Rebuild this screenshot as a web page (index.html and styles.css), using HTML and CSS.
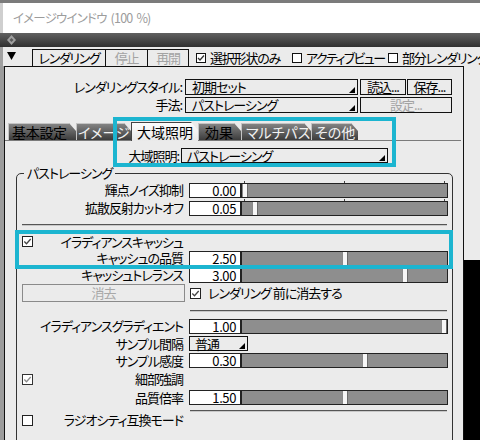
FILE: index.html
```html
<!DOCTYPE html>
<html lang="ja">
<head>
<meta charset="utf-8">
<title>イメージウインドウ</title>
<link rel="stylesheet" href="styles.css">
</head>
<body>
<div class="win">
  <div class="topstrip"></div>
  <div class="titlebar">イメージウインドウ (100 %)</div>
  <div class="darkbar">
    <svg class="grip" width="9" height="10" viewBox="0 0 9 10"><polygon points="4.5,0 9,5 4.5,10 0,5" fill="#a0a0a0"/><polygon points="4.5,3 6.5,5 4.5,7 2.5,5" fill="#5a5a5a"/></svg>
  </div>
  <div class="toolbar">
    <svg class="menu-tri" width="9" height="8" viewBox="0 0 9 8"><polygon points="0,0 9,0 4.5,8" fill="#000"/></svg>
    <div class="btngroup">
      <span class="tbtn tb1">レンダリング</span>
      <span class="tbtn tb2 dis">停止</span>
      <span class="tbtn tb3 dis">再開</span>
    </div>
    <span class="tcheck tc1"><svg class="cb" width="10" height="10" viewBox="0 0 10 10"><rect x="0.5" y="0.5" width="9" height="9" fill="#fff" stroke="#111"/><path d="M2 5 L4 7 L8 2.5" fill="none" stroke="#333" stroke-width="1.3"/></svg>選択形状のみ</span>
    <span class="tcheck tc2"><svg class="cb" width="10" height="10" viewBox="0 0 10 10"><rect x="0.5" y="0.5" width="9" height="9" fill="#fff" stroke="#111"/></svg>アクティブビュー</span>
    <span class="tcheck tc3"><svg class="cb" width="10" height="10" viewBox="0 0 10 10"><rect x="0.5" y="0.5" width="9" height="9" fill="#fff" stroke="#111"/></svg>部分レンダリング</span>
  </div>
  <div class="main">
    <div class="lstrip"></div>
    <div class="panel">
      <div class="frow">
        <span class="flabel">レンダリングスタイル:</span>
        <span class="dd dd-style">初期セット<i class="arr"></i></span>
        <span class="pbtn pb1">読込...</span>
        <span class="pbtn pb2">保存...</span>
      </div>
      <div class="frow">
        <span class="flabel">手法:</span>
        <span class="dd dd-style">パストレーシング<i class="arr"></i></span>
        <span class="pbtn pb3 dis">設定...</span>
      </div>
      <div class="tabs">
        <span class="tab dk t1">基本設定</span>
        <span class="tab t2">イメージ</span>
        <span class="tab active t3">大域照明</span>
        <span class="tab dk t4">効果</span>
        <span class="tab t5">マルチパス</span>
        <span class="tab t6">その他</span>
      </div>
      <div class="girow">
        <span class="gilabel">大域照明:</span>
        <span class="dd dd-gi">パストレーシング<i class="arr"></i></span>
      </div>
      <fieldset class="group">
        <legend>パストレーシング</legend>
        <div class="row h18">
          <span class="lab">輝点ノイズ抑制</span><span class="inp">0.00</span>
          <span class="sl"><i class="tick tk1"></i><i class="tick tk2"></i><i class="tick tk3"></i><i class="thumb" style="left:0px"></i></span>
        </div>
        <div class="row h18">
          <span class="lab">拡散反射カットオフ</span><span class="inp">0.05</span>
          <span class="sl"><i class="tick tk1"></i><i class="tick tk2"></i><i class="tick tk3"></i><i class="thumb" style="left:10px"></i></span>
        </div>
        <div class="sep sep1"></div>
        <div class="row h17">
          <span class="lab cblab"><svg class="cb" width="11" height="11" viewBox="0 0 11 11"><rect x="0.5" y="0.5" width="10" height="10" fill="#fff" stroke="#222"/><path d="M2.3 5.5 L4.5 7.7 L8.7 3" fill="none" stroke="#444" stroke-width="1.3"/></svg><span class="cbt">イラディアンスキャッシュ</span></span>
        </div>
        <div class="row h16">
          <span class="lab">キャッシュの品質</span><span class="inp">2.50</span>
          <span class="sl"><i class="thumb" style="left:100px"></i></span>
        </div>
        <div class="row h18">
          <span class="lab">キャッシュトレランス</span><span class="inp">3.00</span>
          <span class="sl"><i class="thumb" style="left:160px"></i></span>
        </div>
        <div class="row h18">
          <span class="clr">消去</span>
          <svg class="cb cbclr" width="11" height="11" viewBox="0 0 11 11"><rect x="0.5" y="0.5" width="10" height="10" fill="#fff" stroke="#222"/><path d="M2.3 5.5 L4.5 7.7 L8.7 3" fill="none" stroke="#444" stroke-width="1.3"/></svg>
          <span class="clrtext">レンダリング 前に消去する</span>
        </div>
        <div class="sep sep2"></div>
        <div class="row h18">
          <span class="lab">イラディアンスグラディエント</span><span class="inp">1.00</span>
          <span class="sl"><i class="thumb" style="left:199px"></i></span>
        </div>
        <div class="row h17">
          <span class="lab">サンプル間隔</span>
          <span class="dd dd-small">普通<i class="arr"></i></span>
        </div>
        <div class="row h17">
          <span class="lab">サンプル感度</span><span class="inp">0.30</span>
          <span class="sl"><i class="thumb" style="left:120px"></i></span>
        </div>
        <div class="row h20">
          <span class="lab cblab"><svg class="cb" width="11" height="11" viewBox="0 0 11 11"><rect x="0.5" y="0.5" width="10" height="10" fill="#fff" stroke="#333"/><path d="M2.3 5.5 L4.5 7.7 L8.7 3" fill="none" stroke="#8c8c8c" stroke-width="1.3"/></svg><span class="cbt">細部強調</span></span>
        </div>
        <div class="row h17">
          <span class="lab">品質倍率</span><span class="inp">1.50</span>
          <span class="sl"><i class="thumb" style="left:100px"></i></span>
        </div>
        <div class="sep sep3"></div>
        <div class="row h16">
          <span class="lab cblab"><svg class="cb" width="11" height="11" viewBox="0 0 11 11"><rect x="0.5" y="0.5" width="10" height="10" fill="#fff" stroke="#222"/></svg><span class="cbt">ラジオシティ互換モード</span></span>
        </div>
      </fieldset>
    </div>
    <div class="rcol"><div class="rc-light"></div><div class="rc-dark"></div></div>
  </div>
  <div class="hl hl1"></div>
  <div class="hl hl2"></div>
</div>
</body>
</html>
```

FILE: styles.css
```css
* { box-sizing: border-box; }
html, body { margin: 0; padding: 0; }
body {
  width: 480px; height: 440px; overflow: hidden;
  background: #ebebeb;
  font-family: "Noto Sans CJK JP", "Noto Sans", sans-serif;
  font-size: 13px; line-height: 16px; color: #000;
  letter-spacing: -1px;
  font-feature-settings: "palt" 1;
}
.win { position: relative; width: 480px; height: 440px; overflow: hidden; display: flex; flex-direction: column; }
.topstrip { flex: none; height: 3px; background: #7b7b7b; }
.titlebar {
  flex: none; height: 30px; background: #fff; border-left: 3px solid #cfcfcf;
  padding-left: 10px; display: flex; align-items: center; color: #9c9c9c; white-space: nowrap;
  font-size: 12.5px; letter-spacing: -0.8px; word-spacing: 2px;
}
.darkbar { flex: none; height: 14px; background: linear-gradient(#616161, #303030); display: flex; align-items: center; padding-left: 7px; }
.grip { display: block; }
.toolbar { flex: none; height: 19px; display: flex; align-items: flex-end; border-left: 3px solid #a0a0a0; white-space: nowrap; overflow: hidden; }
.menu-tri { display: block; flex: none; margin: 0 0 6px 4px; }
.btngroup { display: flex; flex: none; margin-left: 16px; height: 17px; border-top: 1px solid #111; border-right: 1px solid #111; }
.tbtn { display: block; height: 16px; line-height: 16px; text-align: center; border-left: 1px solid #111; letter-spacing: -1.3px; }
.tb1 { width: 73px; }
.tb2 { width: 42px; }
.tb3 { width: 41px; }
.dis { color: #a3a3a3; }
.tcheck { display: flex; align-items: center; height: 17px; flex: none; letter-spacing: -1.2px; overflow: hidden; }
.tc1 { margin-left: 7px; width: 96px; }
.tc2 { width: 96px; letter-spacing: -1.6px; }
.tc3 { width: 120px; }
.tcheck .cb { margin-right: 4px; }
.cb { display: block; flex: none; }

.main { flex: 1; display: flex; min-height: 0; }
.lstrip { flex: none; width: 4px; background: #9c9c9c; }
.panel { flex: none; width: 460px; border: 1px solid #111; border-bottom: none; padding-top: 12px; overflow: hidden; }
.rcol { flex: 1; display: flex; flex-direction: column; }
.rc-light { flex: none; height: 194px; }
.rc-dark { flex: 1; background: #000; }

.frow { display: flex; height: 16px; }
.frow + .frow { margin-top: 2px; }
.flabel { flex: none; width: 177px; text-align: right; line-height: 16px; white-space: nowrap; }
.dd { display: flex; flex: none; border: 1px solid #111; line-height: 14px; padding-left: 6px; white-space: nowrap; }
.dd-style { width: 173px; margin-left: 3px; }
.arr { display: block; flex: none; align-self: flex-end; width: 6px; height: 6px; margin: 0 2px 1px auto; background: #000; clip-path: polygon(100% 0, 100% 100%, 0 100%); }
.pbtn { flex: none; border: 1px solid #111; text-align: center; line-height: 14px; white-space: nowrap; }
.pb1 { width: 46px; margin-left: 2px; }
.pb2 { width: 45px; margin-left: 1px; }
.pb3 { width: 92px; margin-left: 2px; }

.tabs { display: flex; align-items: flex-end; height: 18px; margin: 10px 2px 0 0; padding-left: 3px; border-bottom: 1px solid #7a7a7a; letter-spacing: 0; }
.tab {
  flex: none; display: block; height: 17px; line-height: 18px; font-size: 14px; color: #f2f2f2;
  background: linear-gradient(#878787, #3c3c3c);
  clip-path: polygon(0 0, calc(100% - 7px) 0, 100% 8px, 100% 100%, 0 100%);
  box-shadow: inset 1px 1px 0 #c4c4c4; white-space: nowrap; overflow: hidden;
}
.tab.dk { color: #000; }
.tab.active { height: 19px; line-height: 20px; margin-bottom: -1px; color: #000; background: linear-gradient(#fdfdfd, #e9e9e9); box-shadow: inset 1px 1px 0 #444; }
.t1 { width: 68px; padding-left: 4px; letter-spacing: -0.3px; }
.t2 { width: 55px; padding-left: 2px; }
.t3 { width: 67px; padding-left: 6px; }
.t4 { width: 43px; padding-left: 7px; }
.t5 { width: 70px; padding-left: 5px; }
.t6 { width: 47px; padding-left: 4px; }

.girow { display: flex; height: 15px; margin-top: 7px; }
.gilabel { flex: none; width: 174px; text-align: right; line-height: 15px; }
.dd-gi { width: 207px; margin-left: 2px; padding-left: 5px; line-height: 13px; }

.group { display: block; margin: 2px 0 0 11px; padding: 0; width: 437px; height: 320px; min-width: 0; border: 1px solid #333; border-radius: 5px; }
.group legend { padding: 0 3px; margin-left: 7px; line-height: 16px; }

.row { display: flex; align-items: center; }
.h16 { height: 16px; }
.h17 { height: 17px; }
.h18 { height: 18px; }
.h20 { height: 20px; }
.lab { flex: none; width: 166px; text-align: right; white-space: nowrap; }
.cblab { display: flex; align-items: center; padding-left: 5px; }
.cbt { margin-left: auto; }
.inp { flex: none; margin-left: 6px; width: 52px; height: 15px; border: 1px solid #222; background: #fff; text-align: right; padding-right: 4px; line-height: 13px; letter-spacing: -0.4px; }
.sl { flex: none; position: relative; width: 207px; height: 15px; border: 1px solid #222; background: #8e8e8e; }
.thumb { position: absolute; top: 0; bottom: 0; width: 6px; background: #f7f7f7; border-left: 1px solid #8a8a8a; border-right: 1px solid #6a6a6a; }
.tick { position: absolute; top: -3px; width: 1px; height: 2px; background: #444; }
.tk1 { left: 2px; }
.tk2 { left: 102px; }
.tk3 { left: 202px; }
.dd-small { width: 59px; height: 15px; margin-left: 6px; padding-left: 5px; line-height: 13px; }

.clr { flex: none; margin-left: 5px; width: 163px; height: 18px; border: 1px solid #8a8a8a; color: #a8a8a8; text-align: center; line-height: 16px; }
.cbclr { margin-left: 5px; }
.clrtext { margin-left: 7px; white-space: nowrap; }

.sep { height: 2px; border-top: 1px solid #555; border-bottom: 1px solid #c8c8c8; }
.sep1 { margin: 7px 0 7px 5px; width: 425px; }
.sep2 { margin: 8px 0 5px 173px; width: 257px; }
.sep3 { margin: 4px 0 0 173px; width: 257px; }

.hl { position: absolute; border: 4px solid #1cb5d0; pointer-events: none; }
.hl1 { left: 113px; top: 117px; width: 283px; height: 50px; }
.hl2 { left: 15px; top: 230px; width: 438px; height: 39px; }
```
